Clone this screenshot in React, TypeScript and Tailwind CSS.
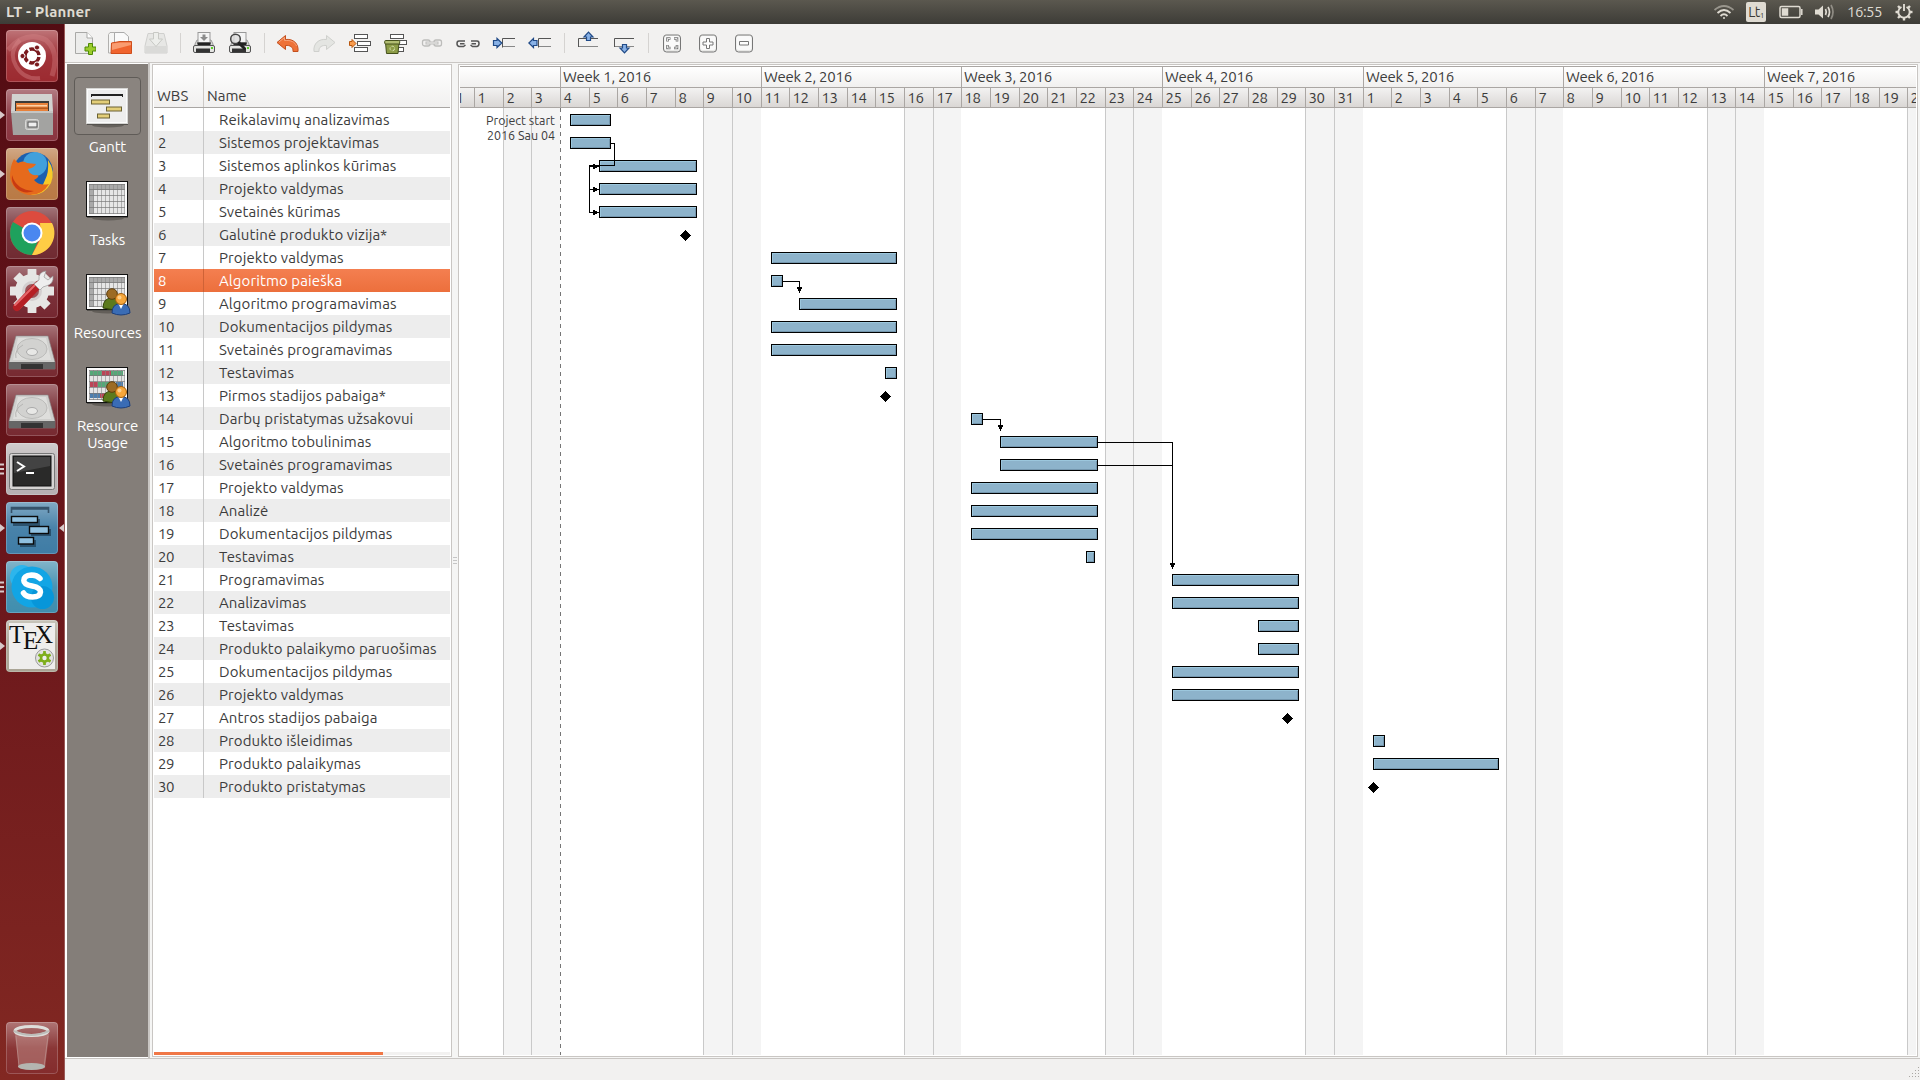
import React from "react";

const DAY = 28.667;
const tick = (k: number) => Math.floor(560.4 + DAY * k) - 460;

const tasks: string[] = [
  "Reikalavimų analizavimas", "Sistemos projektavimas", "Sistemos aplinkos kūrimas", "Projekto valdymas",
  "Svetainės kūrimas", "Galutinė produkto vizija*", "Projekto valdymas", "Algoritmo paieška",
  "Algoritmo programavimas", "Dokumentacijos pildymas", "Svetainės programavimas", "Testavimas",
  "Pirmos stadijos pabaiga*", "Darbų pristatymas užsakovui", "Algoritmo tobulinimas", "Svetainės programavimas",
  "Projekto valdymas", "Analizė", "Dokumentacijos pildymas", "Testavimas", "Programavimas", "Analizavimas",
  "Testavimas", "Produkto palaikymo paruošimas", "Dokumentacijos pildymas", "Projekto valdymas",
  "Antros stadijos pabaiga", "Produkto išleidimas", "Produkto palaikymas", "Produkto pristatymas",
];

// [row, start, end] in chart pixels
const bars: [number, number, number][] = [
  [1, 110, 151], [2, 110, 151], [3, 139, 237], [4, 139, 237], [5, 139, 237],
  [7, 311, 437], [8, 311, 323], [9, 339, 437], [10, 311, 437], [11, 311, 437], [12, 425, 437],
  [14, 511, 523], [15, 540, 638], [16, 540, 638], [17, 511, 638], [18, 511, 638], [19, 511, 638], [20, 626, 635],
  [21, 712, 839], [22, 712, 839], [23, 798, 839], [24, 798, 839], [25, 712, 839], [26, 712, 839],
  [28, 913, 925], [29, 913, 1039],
];
const milestones: [number, number][] = [[6, 225.5], [13, 425.5], [27, 827.5], [30, 913.5]];

function Chart() {
  const weekend: number[] = [-2, 5, 12, 19, 26, 33, 40, 47];
  const links = [
    "M151 35.5H154.5V57.5H129.5V104.5H134", "M129.5 58.5H134", "M129.5 81.5H134",
    "M323 173.5H339.5V180", "M523 311.5H540.5V318", "M638 334.5H712.5V456", "M638 357.5H712.5",
  ];
  const right: [number, number][] = [[139, 58.5], [139, 81.5], [139, 104.5]];
  const down: [number, number][] = [[339.5, 185], [540.5, 323], [712.5, 461]];
  return (
    <svg className="block bg-white" width="1456" height="947" viewBox="0 0 1456 947" shapeRendering="crispEdges">
      {weekend.map((k) => (
        <g key={k}>
          <rect x={tick(k)} y="0" width={tick(k + 2) - tick(k)} height="947" fill="#f4f4f4" />
          <rect x={tick(k)} y="0" width="1" height="947" fill="#c9c9c9" />
          <rect x={tick(k + 1)} y="0" width="1" height="947" fill="#c9c9c9" />
        </g>
      ))}
      <path d="M100.5 0V947" stroke="#777" strokeDasharray="4 4" />
      <g fontFamily="Ubuntu, 'Noto Sans', sans-serif" fontSize="13" fill="#3c3c3c">
        <text x="26" y="17" textLength="69" lengthAdjust="spacingAndGlyphs">Project start</text>
        <text x="27" y="32" textLength="68" lengthAdjust="spacingAndGlyphs">2016 Sau 04</text>
      </g>
      {bars.map(([r, a, b]) => {
        const y = (r - 1) * 23 + 6;
        return (
          <g key={r}>
            <rect x={a} y={y} width={b - a} height="12" fill="#000" />
            <rect x={a + 1} y={y + 1} width={b - a - 2} height="10" fill="#9cc7dd" />
            <rect x={a + 2} y={y + 2} width={b - a - 3} height="9" fill="#7496ad" />
            <rect x={a + 2} y={y + 2} width={b - a - 4} height="8" fill="#8db3cb" />
          </g>
        );
      })}
      {links.map((d) => <path key={d} d={d} fill="none" stroke="#000" />)}
      {right.map(([x, y]) => <path key={y} d={`M${x - 6} ${y - 2.5}h2v1h2v1h2v1h-2v1h-2v1h-2z`} />)}
      {down.map(([x, y]) => <path key={x} d={`M${x - 2.5} ${y - 6}h5v2h-1v2h-1v2h-1v-2h-1v-2h-1z`} />)}
      {milestones.map(([r, x]) => {
        const y = (r - 1) * 23 + 12.5;
        return <path key={r} d={`M${x} ${y - 5.5}L${x + 5.5} ${y}L${x} ${y + 5.5}L${x - 5.5} ${y}Z`} />;
      })}
    </svg>
  );
}

function TimeHeader() {
  const days = Array.from({ length: 51 }, (_, i) => i - 3);
  const date = (k: number) => (k < 28 ? k + 4 : k - 27);
  return (
    <div className="h-[42px] w-[1456px] overflow-hidden border-y border-[#aaa6a3]">
      <div className="flex h-[21px] border-b border-[#aaa6a3] bg-linear-to-b from-white to-[#f1f0ef]">
        <div className="w-[100px] shrink-0" />
        {[1, 2, 3, 4, 5, 6, 7].map((w) => (
          <div key={w} className="shrink-0 overflow-hidden border-l border-[#aaa6a3] pl-[2px] leading-[20px] tracking-[-0.22px] whitespace-nowrap" style={{ width: tick(w * 7) - tick((w - 1) * 7) }}>
            Week {w}, 2016
          </div>
        ))}
      </div>
      <div className="flex h-[19px] bg-linear-to-b from-[#f3f2f1] to-[#dad7d5]">
        <div className="w-[14px] shrink-0 overflow-hidden leading-[20px]"><span className="-ml-[13px]">31</span></div>
        {days.map((k) => (
          <div key={k} className="shrink-0 border-l border-[#aaa6a3] pl-[2.5px] leading-[20px] tracking-[-0.46px]" style={{ width: tick(k + 1) - tick(k) }}>
            {date(k)}
          </div>
        ))}
      </div>
    </div>
  );
}

function TaskTable() {
  return (
    <div className="flex w-[300px] flex-col border border-[#c9c6c3] bg-white px-[1px] pt-[1px] pb-[1px]">
      <div className="flex h-[42px] border-b border-[#a9a6a3] bg-linear-to-b from-white to-[#f1f0ef]">
        <div className="h-full w-[50px] border-r border-[#ccc9c6] pt-[19px] pl-[3px] leading-[21px]">WBS</div>
        <div className="pt-[19px] pl-[3px] leading-[21px]">Name</div>
      </div>
      <div>
        {tasks.map((t, i) => {
          const tone = i === 7 ? "bg-linear-to-b from-[#f47f50] to-[#ec6f3c] text-white" : i % 2 ? "bg-[#ededed]" : "bg-white";
          return (
            <div key={i} className={`flex h-[23px] leading-[24px] whitespace-nowrap ${tone}`}>
              <div className={`w-[50px] border-r pl-1 tracking-[-0.46px] ${i === 7 ? "border-[#cf6236]" : "border-[#c8c8c8]"}`}>{i + 1}</div>
              <div className="pl-[15px] tracking-[0.09px]">{t}</div>
            </div>
          );
        })}
      </div>
      <div className="mt-auto h-[3px] bg-[#f2f1f0]"><div className="h-full w-[229px] bg-[#f07746]" /></div>
    </div>
  );
}

/* ---------- toolbar ---------- */

function Tool({ children }: { children?: React.ReactNode }) {
  return (
    <div className="flex w-9 items-center justify-center">
      <svg width="24" height="24" viewBox="0 0 24 24">{children}</svg>
    </div>
  );
}
const Sep = () => <div className="flex w-3 items-center justify-center"><div className="h-5 w-px bg-[#d5d3d1]" /></div>;

const Printer = () => (
  <g>
    <path d="M3 17V13L5 9H19L21 13V17Z" fill="#d8d8d6" stroke="#888" strokeWidth=".8" />
    <rect x="6" y="1.5" width="12" height="10" fill="#f4f4f4" stroke="#999" />
    <path d="M5 11.5H19L18 15H6Z" fill="#222" />
    <rect x="1.5" y="14.5" width="21" height="7" rx="1.5" fill="#e4e4e2" stroke="#555" />
    <rect x="4" y="17.5" width="14" height="4" fill="#333" />
    <rect x="19" y="16" width="2" height="2" fill="#5bd22a" />
  </g>
);

const Recycle = () => (
  <g>
    <g fill="#fff" stroke="#555"><rect x="6.500" y="3.500" width="13" height="4" /><rect x="9.500" y="9.500" width="13" height="4" /><rect x="6.500" y="16.500" width="13" height="4" /></g>
    <path d="M1.500 11.500H15L14 22.500H2.500Z" fill="#8c9c46" stroke="#46511c" />
    <rect x=".7" y="9.500" width="15" height="3.500" rx="1" fill="#b2bd72" stroke="#46511c" />
    <circle cx="8.300" cy="17.500" r="2.300" fill="none" stroke="#dce3b4" strokeDasharray="3 1.500" />
  </g>
);

const Box = ({ children }: { children?: React.ReactNode }) => (
  <g>
    <rect x="3.500" y="4" width="17" height="17" rx="3" fill="#e9e9e7" stroke="#777" />
    <path d="M5 4H19" stroke="#b8b8b6" />
    <rect x="4.500" y="5" width="15" height="14" rx="2.500" fill="#fafafa" />
    {children}
  </g>
);

function Toolbar() {
  return (
    <div className="flex h-[38px] shrink-0 bg-[#f2f1f0] pl-px">
      <Tool>
        <path d="M3.500 1.500H15L20.500 7V22.500H3.500Z" fill="#ececeb" stroke="#a9a9a7" />
        <path d="M15 1.500V7H20.500" fill="#fff" stroke="#a9a9a7" />
        <path d="M16.500 12.500h4v3.500h3.500v4h-3.500v3.500h-4V20H13v-4h3.500z" fill="#9ccc2c" stroke="#4e8a06" />
      </Tool>
      <Tool>
        <path d="M.5 22V3.500L2 1.500H7L8 3.500H12V22Z" fill="#f5f5f4" stroke="#b1b0ae" />
        <path d="M6.500 1.500H16L20.500 5.500V15H6.500Z" fill="#fafafa" stroke="#aaa" />
        <path d="M3.500 12L12 10.500H23.500V22.500H3Z" fill="#f0642e" stroke="#cf4d1b" />
        <path d="M4 12.500L12 11.500H23V14L4 19Z" fill="#f99c70" />
      </Tool>
      <Tool>
        <path d="M1 15L4 2.500H20L23 15V22H1Z" fill="#e7e7e5" stroke="#d0d0ce" />
        <path d="M1.500 15H22.500V22H1.500Z" fill="#dadad8" />
        <path d="M9.500 1.500h5V8h4L12 15.500 5.500 8h4z" fill="#edeeeb" stroke="#c8c9c5" />
      </Tool>
      <Sep />
      <Tool><Printer /><path d="M10.500 3.500h3V6h2.500L12 10 8 6h2.500z" fill="#8b8b8b" /></Tool>
      <Tool><Printer /><circle cx="7.500" cy="8" r="4.800" fill="#ddd" fillOpacity=".8" stroke="#444" strokeWidth="1.500" /><path d="M11 12L16.500 17.500" stroke="#222" strokeWidth="3" strokeLinecap="round" /></Tool>
      <Sep />
      <Tool><path d="M1 11.500L9.500 4.500V8.500C17 7.500 23 12.500 22 20.500H17C17.500 16 14 14 9.500 14.500V18.500Z" fill="#ee7238" stroke="#c44f1d" /><path d="M3 11L8.500 6.500V9.500C15 9 19 11 20.500 15" fill="none" stroke="#f7a47c" /></Tool>
      <Tool><path d="M23 11.500L14.500 4.500V8.500C7 7.500 1 12.500 2 20.500H7C6.500 16 10 14 14.500 14.500V18.500Z" fill="#e4e5e2" stroke="#cfd0cd" /></Tool>
      <Tool>
        <g fill="#fff" stroke="#555"><rect x="6.500" y="3.500" width="13" height="4" /><rect x="9.500" y="10.500" width="13" height="4" /><rect x="6.500" y="16.500" width="13" height="4" /></g>
        <path d="M1.500 10.500h2.500V8.500L8 12.500 4 16.500V14.500H1.500z" fill="#f89b4d" stroke="#b9560d" />
      </Tool>
      <Tool><Recycle /></Tool>
      <Tool>
        <g fill="none" stroke="#bdbdbb" strokeWidth="1.300"><rect x="2.500" y="9" width="7.500" height="6" rx="2" /><rect x="14" y="9" width="7.500" height="6" rx="2" /></g>
        <rect x="6" y="11" width="12" height="2" fill="#f2f1f0" stroke="#bdbdbb" />
      </Tool>
      <Tool>
        <g fill="none" stroke="#555" strokeWidth="1.500">
          <path d="M9 10H3Q1 10 1 12.500T3 15.500H7.500L9.500 14M4 12.800H8.500M15 10H21Q23 10 23 12.500T21 15.500H16.500L14.500 14M20 12.800H15.500" />
        </g>
      </Tool>
      <Tool><path d="M23 7.500H10.500V16.500" fill="none" stroke="#555" /><path d="M11 15.500H23" stroke="#888" /><path d="M1.500 9.500h3.500V7.500L9.800 12 5 16.500V14.500H1.500z" fill="#88b1e6" stroke="#204a87" strokeWidth="1.200" /></Tool>
      <Tool><path d="M23 7.500H10.500V16.500" fill="none" stroke="#555" /><path d="M11 15.500H23" stroke="#888" /><path d="M9 9.500H5.500V7.500L.8 12 5.500 16.500V14.500H9z" fill="#88b1e6" stroke="#204a87" strokeWidth="1.200" /></Tool>
      <Sep />
      <Tool><path d="M2.500 16V7.500H22" fill="none" stroke="#555" /><path d="M3 15.500H22" stroke="#888" /><path d="M10.500 9.500V6H8L12.500 1.200 17 6H14.500V9.500z" fill="#88b1e6" stroke="#204a87" strokeWidth="1.200" /></Tool>
      <Tool><path d="M2.500 16V7.500H22" fill="none" stroke="#555" /><path d="M3 15.500H22" stroke="#888" /><path d="M10.500 13.500V17H8L12.500 21.800 17 17H14.500V13.500z" fill="#88b1e6" stroke="#204a87" strokeWidth="1.200" /></Tool>
      <Sep />
      <Tool><Box><path d="M10.500 7.500H7.500V10.500M14 7.500H17V10.500M10.500 17H7.500V14M14 17H17V14" fill="none" stroke="#777" strokeWidth="2.600" /><path d="M10 7.500H7.500V10M14.500 7.500H17V10M10 17H7.500V14.500M14.500 17H17V14.500" fill="none" stroke="#fff" strokeWidth=".8" /></Box></Tool>
      <Tool><Box><path d="M10.500 7.500h3v3.500h3.500v3h-3.500v3.500h-3V14H7v-3h3.500z" fill="#fff" stroke="#777" /></Box></Tool>
      <Tool><Box><path d="M7.500 10.500h9v3.500h-9z" fill="#fff" stroke="#777" /></Box></Tool>
    </div>
  );
}

/* ---------- view sidebar ---------- */

function ViewIcon({ kind }: { kind: string }) {
  const grid = kind !== "gantt";
  const cells: [number, number, number, string][] = [
    [4, 4, 12, "#55a878"], [16, 4, 9, "#bb4557"], [25, 4, 12, "#55a878"], [4, 15, 8, "#bb4557"], [12, 15, 12, "#55a878"],
    [30, 15, 7, "#4f7fae"], [4, 26, 10, "#4f7fae"], [14, 26, 6, "#bb4557"],
  ];
  return (
    <svg width="48" height="48" viewBox="0 0 48 48" className="block">
      <ellipse cx="24" cy="43" rx="16" ry="2.500" fill="#4d4945" opacity=".6" />
      <g transform="translate(2,6)">
        <rect x=".5" y=".5" width="41" height="35" fill="#fbfbfb" stroke={grid ? "#111" : "#d5d5d3"} />
        <path d="M1 36.500H42" stroke="#55524e" />
        {kind === "gantt" && (
          <g>
            <rect x="2" y="2" width="38" height="32" fill="#eee" />
            <path d="M5 7H37" stroke="#222" strokeWidth="2" /><path d="M5.500 6V9M36.500 6V9" stroke="#222" />
            <g fill="#e3ce79" stroke="#6a6134"><rect x="5.500" y="12" width="18" height="4" /><rect x="20.500" y="19" width="15" height="4" /><rect x="11.500" y="26" width="12" height="4" /></g>
          </g>
        )}
        {grid && (
          <g>
            <rect x="3" y="3" width="36" height="30" fill="#e6e6e6" />
            {kind !== "usage" && <path d="M3 3H39V9H8V33H3Z" fill="#aaa" />}
            {kind === "usage" && cells.map(([x, y, w, f]) => <rect key={`${x}-${y}`} x={x} y={y} width={w} height="5" fill={f} />)}
            <path d="M3.500 3V33M7.500 3V33M11.500 3V33M15.500 3V33M19.500 3V33M23.500 3V33M27.500 3V33M31.500 3V33M35.500 3V33M38.500 3V33" stroke="#888" strokeWidth=".6" />
            <path d="M3 3.500H39M3 8.500H39M3 14.500H39M3 20.500H39M3 26.500H39M3 32.500H39" stroke="#777" strokeWidth=".7" />
          </g>
        )}
        {(kind === "resources" || kind === "usage") && (
          <g>
            <path d="M17 34Q17 24 26 24T35 34Q26 37 17 34Z" fill="#5c7a1d" stroke="#334508" />
            <circle cx="26" cy="20" r="5.300" fill="#9c6b24" stroke="#5c3c0b" />
            <path d="M26 39Q26 29.500 35 29.500T44 39Q35 43 26 39Z" fill="#3a6cb5" stroke="#1c3f7c" />
            <path d="M32.500 30L35 35 37.500 30Z" fill="#fff" />
            <circle cx="35" cy="25" r="5.500" fill="#f6a63b" stroke="#a5600c" />
            <circle cx="33.500" cy="23.500" r="2" fill="#fcd08c" />
          </g>
        )}
      </g>
    </svg>
  );
}

function Views() {
  const items = [["gantt", "Gantt"], ["tasks", "Tasks"], ["resources", "Resources"], ["usage", "Resource Usage"]];
  return (
    <div className="flex w-[81px] shrink-0 flex-col items-center bg-[#847e79] pt-[13px] text-white">
      {items.map(([kind, label]) => (
        <div key={kind} className="flex h-[93px] shrink-0 flex-col items-center">
          <div className={`flex h-[58px] w-[67px] shrink-0 items-center justify-center rounded-[4px] ${kind === "gantt" ? "border border-[#5f5b57] bg-[#8a847f]" : ""}`}>
            <ViewIcon kind={kind} />
          </div>
          <div className="mt-[3px] w-[78px] shrink-0 text-center leading-[17px] tracking-[-0.15px]">{label}</div>
        </div>
      ))}
    </div>
  );
}

/* ---------- launcher ---------- */

const Drive = () => (
  <g>
    <path d="M10 11H42L49 37V44H3V37Z" fill="#cfcfcd" stroke="#888" strokeWidth=".6" />
    <path d="M3 37H49V44H3Z" fill="#666" /><path d="M15 39H37V44H15Z" fill="#333" />
    <path d="M12 13H40L45 35H7Z" fill="#dededc" />
    <ellipse cx="26" cy="24" rx="15" ry="10.500" fill="#d2d2d0" stroke="#bcbcba" />
    <path d="M10 33Q8 25 17 20" fill="none" stroke="#b5b5b3" />
    <ellipse cx="26" cy="27" rx="5.500" ry="3.500" fill="#e8e8e6" stroke="#aaa" />
  </g>
);

const gear = (cx: number, cy: number, r: number, teeth: number) =>
  Array.from({ length: teeth }, (_, i) => {
    const a = (i * 360) / teeth;
    return <rect key={i} x={cx - r * 0.2} y={cy - r} width={r * 0.4} height={r * 0.5} rx=".5" transform={`rotate(${a} ${cx} ${cy})`} />;
  });

const apps: { bg: string; mark?: "one" | "many"; active?: boolean; art: React.ReactNode }[] = [
  { bg: "bg-[#9c2a30]", art: (
    <g>
      <path d="M2 20Q20 0 40 10Q54 22 46 46" fill="none" stroke="#d98a8c" strokeWidth="5" opacity=".35" />
      <path d="M14 10Q2 22 10 36T34 48" fill="none" stroke="#d98a8c" strokeWidth="4" opacity=".4" />
      <circle cx="26" cy="26" r="14" fill="#fff" />
      <circle cx="26" cy="26" r="7" fill="none" stroke="#7a1a1e" strokeWidth="3.500" strokeDasharray="12.600 2" strokeDashoffset="-1" />
      <g fill="#7a1a1e" stroke="#fff"><circle cx="16.500" cy="26" r="2.600" /><circle cx="31" cy="17.500" r="2.600" /><circle cx="31" cy="34.500" r="2.600" /></g>
    </g>) },
  { bg: "bg-[#8a3540]", mark: "one", art: (
    <g>
      <path d="M6 5H46L47 22H5Z" fill="#d2d2d0" /><rect x="9" y="12" width="34" height="10" fill="#3c3b39" />
      <path d="M10 14H42V22H10Z" fill="#e8813a" /><path d="M11 16H41V17.500H11Z" fill="#fbd2a8" /><path d="M10 18.500H42V20H10Z" fill="#b65a1c" />
      <path d="M5 22H47V46H7Z" fill="#a3a3a1" /><path d="M5 22H47V24H5Z" fill="#c5c5c3" />
      <rect x="19.500" y="30.500" width="13" height="10" rx="2" fill="#b9b9b7" stroke="#d9d9d7" /><rect x="22" y="33" width="9" height="5" fill="#eee" stroke="#555" />
    </g>) },
  { bg: "bg-[#b97a45]", mark: "one", art: (
    <g>
      <circle cx="27" cy="24" r="20" fill="#1b5fae" /><circle cx="29" cy="16" r="12" fill="#4bb0e6" opacity=".8" />
      <path d="M42 12Q50 24 45 35Q38 48 24 47Q36 42 39 32Q43 25 42 12Z" fill="#f8c928" />
      <path d="M8 11L12 15Q17 12 21 15L30 16Q28 20 22 21Q24 28 31 27Q35 28 28 32Q33 38 43 36Q36 48 22 47Q6 43 4 29Q4 18 8 11Z" fill="#e66a1c" />
      <path d="M6 27Q10 42 28 43Q18 47 10 40Q5 35 6 27Z" fill="#c83a12" />
    </g>) },
  { bg: "bg-[#702a31]", art: (
    <g>
      <circle cx="26" cy="26" r="22" fill="#dd4b3e" />
      <path d="M26 26L7 15A22 22 0 0 0 26 48L33 32Z" fill="#1fa15d" />
      <path d="M34 16H46A22 22 0 0 1 26 48L35 31Z" fill="#fecd45" />
      <circle cx="26" cy="26" r="10.500" fill="#fff" /><circle cx="26" cy="26" r="8.500" fill="#4a87f0" />
    </g>) },
  { bg: "bg-[#752730]", art: (
    <g>
      <g fill="#e6e6e4">{gear(26, 25, 22, 8)}<circle cx="26" cy="25" r="17" /></g>
      <circle cx="26" cy="25" r="10" fill="#d3cfcf" /><circle cx="26" cy="25" r="7" fill="#9b5358" />
      <path d="M32 19L11 41" stroke="#b51f24" strokeWidth="8" strokeLinecap="round" /><path d="M29 19L9 39" stroke="#e6676a" strokeWidth="2" strokeLinecap="round" />
      <path d="M28 18L33 14Q32 6 40 5L38 11L42 14L47 10Q48 18 40 20L37 21L34 24Z" fill="#eee" stroke="#999" strokeWidth=".7" />
    </g>) },
  { bg: "bg-[#772a31]", art: <Drive /> },
  { bg: "bg-[#772a31]", art: <Drive /> },
  { bg: "bg-[#b7b1b2]", mark: "many", art: (
    <g>
      <rect x="3.500" y="10.500" width="45" height="36" rx="2" fill="#d5d3d2" stroke="#777" />
      <rect x="7" y="13" width="38" height="30" fill="#2a2a29" stroke="#111" /><path d="M8 14H44V23L8 30Z" fill="#555" opacity=".6" />
      <path d="M11 19L18 23.500L11 28" fill="none" stroke="#fff" strokeWidth="2" /><path d="M20 30H28" stroke="#fff" strokeWidth="2" />
    </g>) },
  { bg: "bg-[#3f7ca5]", mark: "one", active: true, art: (
    <g>
      <path d="M5.500 11V5.500H42.500V11M6 7H42" fill="none" stroke="#35526a" strokeWidth="1.600" />
      <g fill="#173247" opacity=".6"><rect x="7" y="17" width="27" height="7" /><rect x="25" y="27" width="20" height="7" /><rect x="14" y="38" width="16" height="7" /></g>
      <g fill="#8fc0df" stroke="#0a0a0a" strokeWidth="1.400"><rect x="5.500" y="14.500" width="26" height="6" /><rect x="23.500" y="24.500" width="19" height="7" /><rect x="12.500" y="35.500" width="15" height="6.500" /></g>
    </g>) },
  { bg: "bg-[#408eae]", mark: "many", art: (
    <g>
      <circle cx="16" cy="16" r="12" fill="#2db5ec" /><circle cx="26" cy="26" r="20.500" fill="#12a5e5" /><circle cx="36.500" cy="36.500" r="11.500" fill="#0796d9" />
      <path d="M34 17.500Q31 14 25.500 14Q17.800 14.500 17.800 19.500Q17.800 23.500 26 25Q34.500 26.500 34.500 31Q34 36 26.500 36Q20 36 17.500 32" fill="none" stroke="#fff" strokeWidth="5.500" strokeLinecap="round" />
    </g>) },
  { bg: "bg-[#aaa595]", mark: "one", art: (
    <g>
      <rect x="3" y="3" width="46" height="46" fill="#eeedec" />
      <g fontFamily="'Liberation Serif', serif" fill="#111"><text x="3" y="23" fontSize="25">T</text><text x="17" y="29" fontSize="25">E</text><text x="29" y="23" fontSize="25">X</text></g>
      <circle cx="38.500" cy="38" r="9" fill="#e2e2e0" stroke="#999" />
      <g fill="#7eae1c">{gear(38.5, 38, 7, 6)}<circle cx="38.500" cy="38" r="4.800" /></g><circle cx="38.500" cy="38" r="2.200" fill="#eee" />
    </g>) },
];

function Tile({ bg, children }: { bg: string; children: React.ReactNode }) {
  return (
    <div className={`h-[52px] w-[52px] overflow-hidden rounded-[4px] ${bg} bg-linear-to-b from-white/35 via-white/5 to-transparent inset-ring inset-ring-white/20`}>
      <svg width="52" height="52" viewBox="0 0 52 52">{children}</svg>
    </div>
  );
}

function Launcher() {
  return (
    <div className="flex w-[65px] shrink-0 flex-col gap-[7px] border-r border-[#9a5a58] bg-linear-to-b from-[#530c13] via-[#6a161b] to-[#822822] pt-[6px] pb-[6px]">
      {apps.map((a, i) => (
        <div key={i} className="flex items-center">
          <div className="w-[6px]">
            {a.mark === "one" && <svg width="5" height="8" className="block"><path d="M0 0L5 4L0 8Z" fill="#d8c9c9" /></svg>}
            {a.mark === "many" && <svg width="5" height="12" className="block"><path d="M0 1.500H4M0 6H4M0 10.500H4" stroke="#d8c9c9" strokeWidth="2" /></svg>}
          </div>
          <Tile bg={a.bg}>{a.art}</Tile>
          {a.active && <svg width="6" height="8" className="block"><path d="M6 0L1 4L6 8Z" fill="#d8c9c9" /></svg>}
        </div>
      ))}
      <div className="mt-auto ml-[6px]">
        <Tile bg="bg-[#842c2c]">
          <path d="M9 12H43L39 46Q26 50 13 46Z" fill="#d9b5b0" opacity=".35" />
          <path d="M10 14L13 45M42 14L38 45" stroke="#c09b98" opacity=".6" />
          <ellipse cx="25.500" cy="44.500" rx="13.500" ry="3.500" fill="#b4b5b0" />
          <ellipse cx="25.500" cy="9" rx="16.500" ry="4.500" fill="none" stroke="#dededb" strokeWidth="3" />
          <path d="M8 9Q25 17 43 9" fill="none" stroke="#bdbdb9" strokeWidth="2" />
        </Tile>
      </div>
    </div>
  );
}

/* ---------- top panel ---------- */

function TopPanel() {
  return (
    <div className="flex h-6 shrink-0 items-center justify-between bg-linear-to-b from-[#5b584f] to-[#3d3c37] pr-[7px] pl-[6px] text-[#dfdbd2]">
      <div className="text-[15px] leading-6 font-bold tracking-[0.15px]">LT - Planner</div>
      <div className="flex h-6 items-center">
        <svg width="22" height="16" viewBox="0 0 22 16" fill="none" stroke="#dfdbd2" strokeWidth="1.800">
          <path d="M1.500 6Q11 -2 20.500 6" opacity=".5" /><path d="M4.500 9Q11 3 17.500 9" /><path d="M7.500 12Q11 8.500 14.500 12" /><circle cx="11" cy="14" r="1" fill="#dfdbd2" stroke="none" />
        </svg>
        <div className="ml-[11px] flex h-5 w-5 items-center justify-center rounded-[2px] bg-[#dfdbd2] text-[14px] leading-none tracking-[-0.5px] text-[#3c3b37]">
          Lt<span className="-mb-2 text-[8px]">1</span>
        </div>
        <svg className="ml-[13px]" width="24" height="14" viewBox="0 0 24 14" fill="none" stroke="#dfdbd2" strokeWidth="1.500">
          <rect x="1" y="1.500" width="20" height="11" rx="1.500" /><path d="M22.800 4V10" /><rect x="3.500" y="4" width="5" height="6" fill="#dfdbd2" />
        </svg>
        <svg className="ml-[12px]" width="20" height="16" viewBox="0 0 20 16" fill="none" stroke="#dfdbd2" strokeWidth="1.700">
          <path d="M0 5.500H3.500L8 1.500V14.500L3.500 10.500H0Z" fill="#dfdbd2" stroke="none" /><path d="M10.500 5Q12 8 10.500 11" /><path d="M13 3Q16 8 13 13" /><path d="M16 1Q20 8 16 15" opacity=".45" />
        </svg>
        <div className="ml-[12px] w-[37px] text-[15px] leading-6 tracking-[-0.5px] whitespace-nowrap">16:55</div>
        <svg className="ml-[11px]" width="18" height="18" viewBox="0 0 18 18">
          <g fill="#dfdbd2">{[45, 90, 135, 180, 225, 270, 315].map((a) => <rect key={a} x="7.800" y=".5" width="2.400" height="3.500" transform={`rotate(${a} 9 9)`} />)}</g>
          <path d="M6.500 4A5.700 5.700 0 1 0 11.500 4" fill="none" stroke="#dfdbd2" strokeWidth="1.900" /><path d="M9 1V8" stroke="#dfdbd2" strokeWidth="1.900" />
        </svg>
      </div>
    </div>
  );
}

export default function App() {
  return (
    <div className="flex h-[1080px] w-[1920px] flex-col overflow-hidden bg-[#f2f1f0] font-[Ubuntu,'Noto_Sans',sans-serif] text-[15px] text-[#3c3c3c]">
      <TopPanel />
      <div className="flex min-h-0 flex-1">
        <Launcher />
        <div className="flex min-w-0 flex-1 flex-col">
          <Toolbar />
          <div className="flex h-[997px] border-y border-[#c9c6c3] bg-white">
            <div className="flex w-[84px] shrink-0 border-r border-[#c9c6c3] py-px pl-[2px]"><Views /></div>
            <div className="flex flex-1 border-l border-[#c9c6c3] bg-[#f5f5f4] py-px pl-[2px]">
              <TaskTable />
              <div className="flex w-[6px] flex-col items-center justify-center gap-[2px]">
                <div className="h-px w-1 bg-[#c5c5c5]" /><div className="h-px w-1 bg-[#c5c5c5]" /><div className="h-px w-1 bg-[#c5c5c5]" />
              </div>
              <div className="w-[1460px] overflow-hidden border border-[#c9c6c3] bg-white pt-[1px] pl-[1px]">
                <TimeHeader />
                <Chart />
              </div>
            </div>
          </div>
          <div className="flex flex-1 items-end justify-end">
            <svg width="12" height="12" fill="#aaa7a3" className="mb-[1px]">
              <path d="M10 0h1v1h-1zM7 3h1v1h-1zM10 3h1v1h-1zM4 6h1v1h-1zM7 6h1v1h-1zM10 6h1v1h-1zM1 9h1v1h-1zM4 9h1v1h-1zM7 9h1v1h-1zM10 9h1v1h-1z" />
            </svg>
          </div>
        </div>
      </div>
    </div>
  );
}
